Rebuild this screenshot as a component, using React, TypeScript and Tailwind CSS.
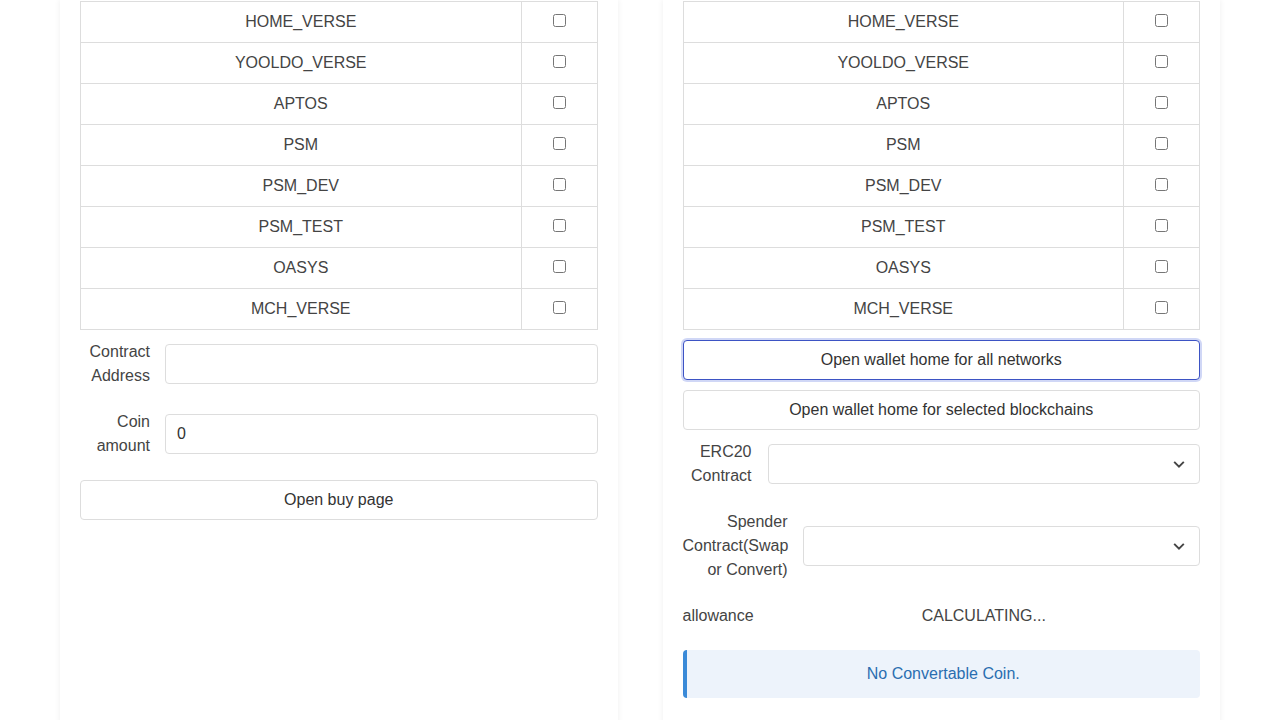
import React from "react";

const networks = ["HOME_VERSE", "YOOLDO_VERSE", "APTOS", "PSM", "PSM_DEV", "PSM_TEST", "OASYS", "MCH_VERSE"];

function NetTable() {
  return (
    <table className="w-full border-collapse">
      <tbody>
        {networks.map((n) => (
          <tr key={n}>
            <td className="border border-[#dddddd] h-[41px] text-center align-middle p-0">{n}</td>
            <td className="border border-[#dddddd] w-[76px] text-center align-middle p-0">
              <div className="flex items-center justify-center -translate-y-[2px]">
                <input type="checkbox" className="w-[13px] h-[13px] m-0" />
              </div>
            </td>
          </tr>
        ))}
      </tbody>
    </table>
  );
}

function Chevron() {
  return (
    <svg width="14" height="14" viewBox="0 0 16 16" className="absolute right-[13px] top-1/2 -translate-y-1/2">
      <path d="M2.5 5.5 L8 11 L13.5 5.5" fill="none" stroke="#444" strokeWidth="2.2" strokeLinecap="butt" strokeLinejoin="miter" />
    </svg>
  );
}

export default function App() {
  return (
    <div className="min-h-[720px] bg-white text-[16px] leading-[24px] text-[#444444]" style={{ fontFamily: '"Liberation Sans", Arial, sans-serif' }}>
      <div className="grid grid-cols-2 gap-[45px] px-[60px]">
        {/* Left panel */}
        <div className="bg-white shadow-[0_0_6px_rgba(0,0,0,0.07)] px-[20px] pt-px pb-[300px]">
          <NetTable />
          <div className="mt-[10px] flex items-center gap-[15px] mb-[22px]">
            <div className="w-[70px] text-right shrink-0">Contract Address</div>
            <input className="flex-1 h-[40px] border border-[#dddddd] rounded-[4px] px-[12px] outline-none" />
          </div>
          <div className="flex items-center gap-[15px] mb-[22px]">
            <div className="w-[70px] text-right shrink-0">Coin amount</div>
            <input defaultValue="0" className="flex-1 h-[40px] border border-[#dddddd] rounded-[4px] px-[11px] outline-none text-[#333333]" />
          </div>
          <button className="w-full h-[40px] border border-[#dddddd] rounded-[4px] bg-white text-center text-[#333333]">Open buy page</button>
        </div>

        {/* Right panel */}
        <div className="bg-white shadow-[0_0_6px_rgba(0,0,0,0.07)] px-[20px] pt-px pb-[40px]">
          <NetTable />
          <button className="mt-[10px] w-full h-[40px] border border-[#3d53c4] rounded-[4px] bg-white text-center text-[#333333] shadow-[0_0_0_2px_rgba(120,140,230,0.35)]">
            Open wallet home for all networks
          </button>
          <button className="mt-[10px] w-full h-[40px] border border-[#dddddd] rounded-[4px] bg-white text-center text-[#333333]">
            Open wallet home for selected blockchains
          </button>
          <div className="mt-[10px] flex items-center gap-[16px] mb-[22px]">
            <div className="w-[69px] text-right shrink-0">ERC20 Contract</div>
            <div className="relative flex-1 h-[40px] border border-[#dddddd] rounded-[4px]">
              <Chevron />
            </div>
          </div>
          <div className="flex items-center gap-[15px] mb-[22px]">
            <div className="w-[105px] text-right shrink-0">Spender Contract(Swap or Convert)</div>
            <div className="relative flex-1 h-[40px] border border-[#dddddd] rounded-[4px]">
              <Chevron />
            </div>
          </div>
          <div className="flex items-center mb-[22px]">
            <div className="w-[85px] shrink-0">allowance</div>
            <div className="flex-1 text-center">CALCULATING...</div>
          </div>
          <div className="h-[48px] rounded-[4px] bg-[#edf3fb] border-l-[4px] border-[#3a8ad8] flex items-center justify-center text-[#2a6eb0]">
            No Convertable Coin.
          </div>
        </div>
      </div>
    </div>
  );
}
